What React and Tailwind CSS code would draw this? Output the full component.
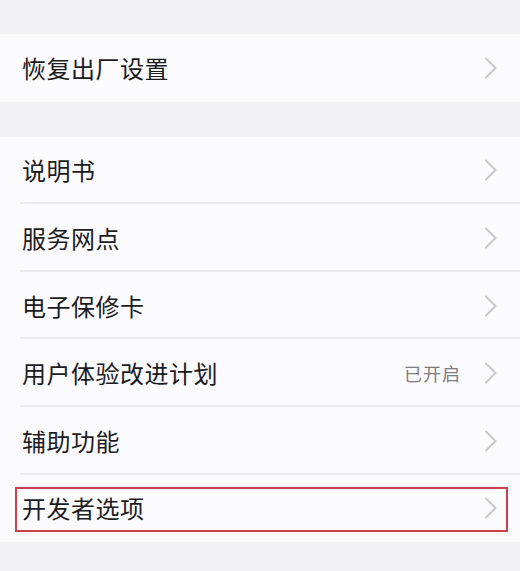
import React from 'react';

const Chevron = () => (
  <svg width="14" height="22" viewBox="0 0 14 22" fill="none" className="shrink-0">
    <polyline points="2,1.5 11.5,11 2,20.5" stroke="#c9c8cd" strokeWidth="2" strokeLinecap="round" strokeLinejoin="round" />
  </svg>
);

const Row = ({ label, value, last, highlight }) => (
  <div className="relative h-[67.6px] flex items-center pl-[22px] pr-[22px]">
    <span className="flex-1 text-[24px] tracking-[0.5px] text-[#1c1c1e]">{label}</span>
    {value && <span className="text-[18px] tracking-[1px] text-[#7d7d80] mr-[23px]">{value}</span>}
    <Chevron />
    {!last && <div className="absolute left-[20px] right-0 bottom-0 h-[2px] bg-[#ebeaee]" />}
    {highlight && (
      <div className="absolute left-[15px] right-[12px] top-[12px] bottom-[10px] border-2 border-[#c9414d] pointer-events-none" />
    )}
  </div>
);

export default function App() {
  const items = [
    { label: '说明书' },
    { label: '服务网点' },
    { label: '电子保修卡' },
    { label: '用户体验改进计划', value: '已开启' },
    { label: '辅助功能' },
    { label: '开发者选项', highlight: true },
  ];

  return (
    <div
      className="w-[520px] h-[571px] overflow-hidden bg-[#f2f1f4]"
      style={{ fontFamily: '"Noto Sans CJK SC", "Noto Sans", sans-serif' }}
    >
      <div className="h-[34px]" />
      <div className="bg-[#fbfafc]">
        <Row label="恢复出厂设置" last />
      </div>
      <div className="h-[35px]" />
      <div className="bg-[#fbfafc]">
        {items.map((it, i) => (
          <Row key={it.label} {...it} last={i === items.length - 1} />
        ))}
      </div>
    </div>
  );
}
